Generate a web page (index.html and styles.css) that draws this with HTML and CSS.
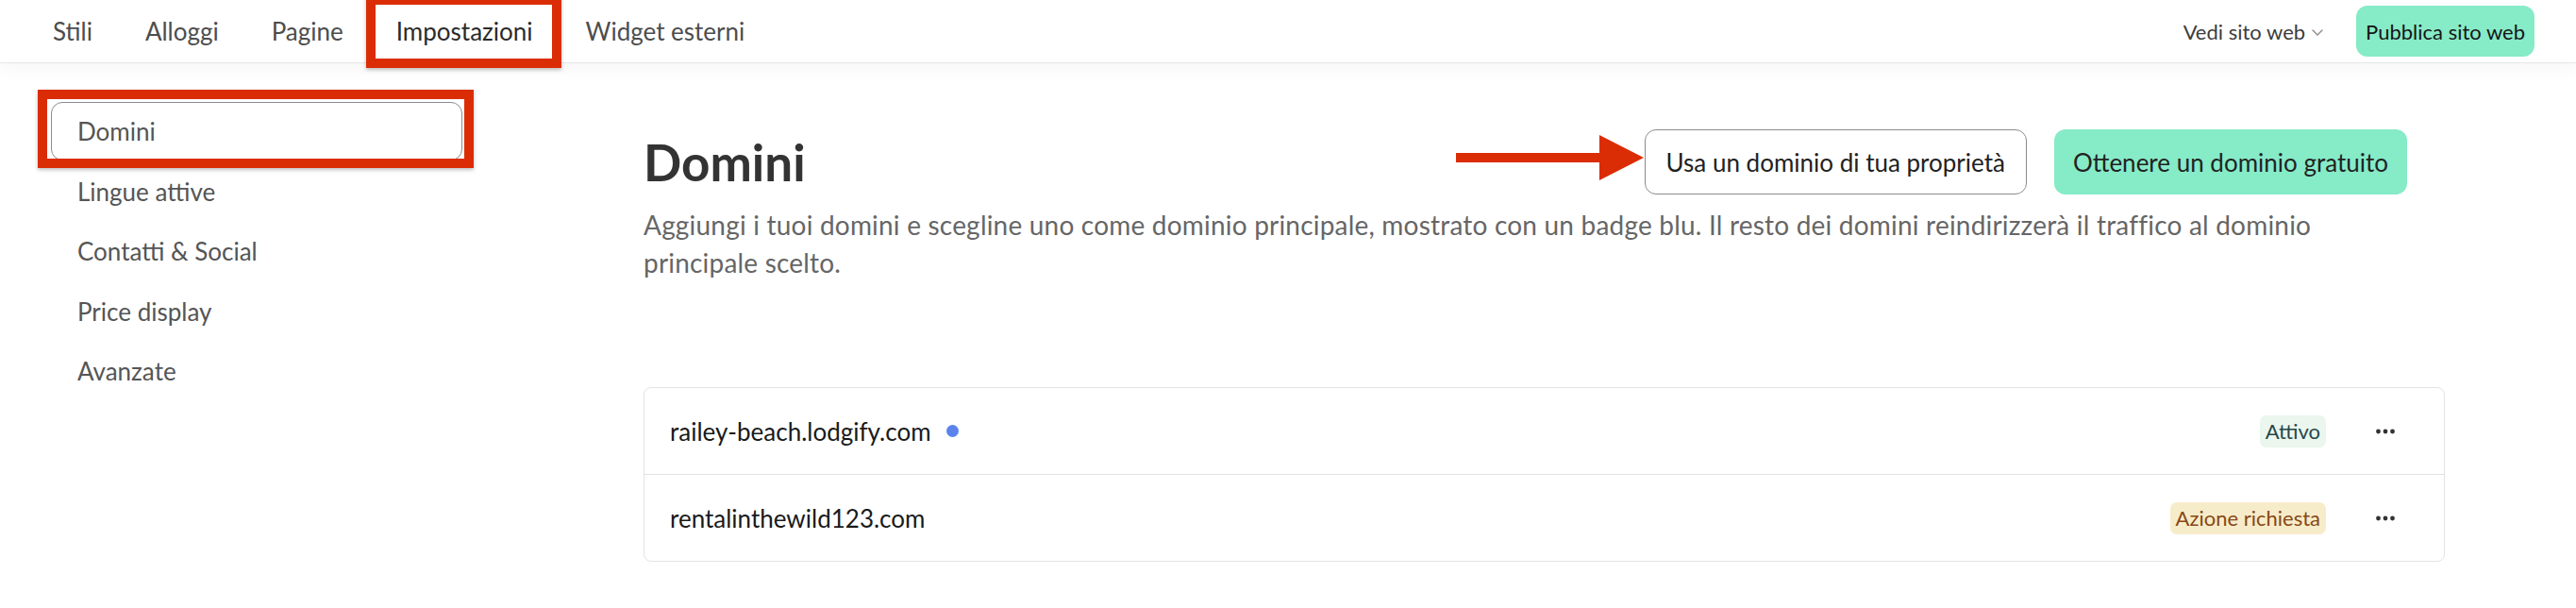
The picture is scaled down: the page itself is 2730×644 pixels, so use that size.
FILE: index.html
```html
<!DOCTYPE html>
<html>
<head>
<title>Domini - Impostazioni</title>
<link rel="stylesheet" href="styles.css">
</head>
<body>

<!-- top bar -->
<header class="topbar">
    <nav class="tabs">
        <a class="tab">Stili</a>
        <a class="tab">Alloggi</a>
        <a class="tab">Pagine</a>
        <a class="tab tab-active">Impostazioni<span class="mark mark-tab"></span></a>
        <a class="tab">Widget esterni</a>
    </nav>
    <div class="topbar-right">
        <a class="view-site">Vedi sito web
            <svg class="chevron" width="12" height="7" viewBox="0 0 12 7"><path d="M1 1l5 5 5-5" fill="none" stroke="#8a8a8a" stroke-width="1.4" stroke-linecap="round" stroke-linejoin="round"/></svg>
        </a>
        <button class="btn-publish">Pubblica sito web</button>
    </div>
</header>

<div class="layout">

    <!-- settings menu -->
    <aside class="side-menu">
        <a class="side-item side-active">Domini<span class="mark mark-side"></span></a>
        <a class="side-item">Lingue attive</a>
        <a class="side-item">Contatti &amp; Social</a>
        <a class="side-item">Price display</a>
        <a class="side-item">Avanzate</a>
    </aside>

    <!-- domains -->
    <main class="content">
        <div class="content-head">
            <h1>Domini</h1>
            <div class="head-actions">
                <button class="btn btn-outline">Usa un dominio di tua proprietà
                    <svg class="arrow" width="200" height="48" viewBox="0 0 200 48"><path d="M0 19h152V0l47 24-47 24V29H0z" fill="#db2d05"/></svg>
                </button>
                <button class="btn btn-green">Ottenere un dominio gratuito</button>
            </div>
        </div>

        <p class="intro">Aggiungi i tuoi domini e scegline uno come dominio principale, mostrato con un badge blu. Il resto dei domini reindirizzerà il traffico al dominio principale scelto.</p>

        <div class="domain-list">
            <div class="domain-row">
                <span class="domain-name">railey-beach.lodgify.com <span class="primary-dot"></span></span>
                <span class="badge badge-ok">Attivo</span>
                <button class="more"><svg width="20" height="6" viewBox="0 0 20 6"><circle cx="2.5" cy="3" r="2.4"/><circle cx="10" cy="3" r="2.4"/><circle cx="17.5" cy="3" r="2.4"/></svg></button>
            </div>
            <div class="domain-row">
                <span class="domain-name">rentalinthewild123.com</span>
                <span class="badge badge-warn">Azione richiesta</span>
                <button class="more"><svg width="20" height="6" viewBox="0 0 20 6"><circle cx="2.5" cy="3" r="2.4"/><circle cx="10" cy="3" r="2.4"/><circle cx="17.5" cy="3" r="2.4"/></svg></button>
            </div>
        </div>
    </main>

</div>

</body>
</html>
```

FILE: styles.css
```css
body {
    margin: 0;
    background-color: #ffffff;
    font-family: "Lato", "Liberation Sans", sans-serif;
    color: #333333;
}

a {
    text-decoration: none;
    color: inherit;
}

button {
    font-family: inherit;
    cursor: pointer;
}

/* top bar */

.topbar {
    height: 66px;
    display: flex;
    align-items: center;
    justify-content: space-between;
    border-bottom: 1px solid #e6e6e6;
    box-shadow: 0 6px 18px rgba(0, 0, 0, 0.04);
    padding: 0 44px 0 28px;
}

.tabs {
    display: flex;
    height: 100%;
}

.tab {
    position: relative;
    display: flex;
    align-items: center;
    padding: 0 28px;
    font-size: 26px;
    color: #4d4d4d;
}

.tab-active {
    color: #2b2b2b;
}

.topbar-right {
    display: flex;
    align-items: center;
}

.view-site {
    display: flex;
    align-items: center;
    gap: 7px;
    font-size: 22px;
    color: #3d3d3d;
    margin-right: 35px;
}

.chevron {
    margin-top: 2px;
}

.btn-publish {
    height: 54px;
    padding: 0 10px;
    border: none;
    border-radius: 12px;
    background-color: #86ebc7;
    color: #161616;
    font-size: 22px;
}

/* red annotation marks */

.mark {
    position: absolute;
    border: 10px solid #db2d05;
    box-shadow: 0 2px 4px rgba(0, 0, 0, 0.25);
    pointer-events: none;
}

.mark-tab {
    top: -5px;
    bottom: -6px;
    left: -4px;
    right: -2px;
}

.mark-side {
    top: -14px;
    bottom: -9px;
    left: -15px;
    right: -13px;
}

/* page */

.layout {
    display: flex;
    padding-top: 41px;
}

.side-menu {
    width: 436px;
    margin-left: 54px;
    display: flex;
    flex-direction: column;
    gap: 1.5px;
}

.side-item {
    position: relative;
    box-sizing: border-box;
    height: 62px;
    display: flex;
    align-items: center;
    padding-left: 27px;
    border: 1px solid transparent;
    border-radius: 12px;
    font-size: 26px;
    color: #555555;
}

.side-active {
    border-color: #8c8c8c;
}

.content {
    width: 1909px;
    margin-left: 192px;
}

.content-head {
    display: flex;
    align-items: center;
    justify-content: space-between;
    padding-right: 40px;
    margin-top: 29px;
}

.content-head h1 {
    margin: 0;
    font-size: 53px;
    font-weight: 700;
    color: #333333;
}

.head-actions {
    display: flex;
    gap: 29px;
}

.btn {
    height: 69px;
    padding: 0 22px;
    border-radius: 12px;
    font-size: 26px;
    color: #222222;
}

.btn-outline {
    position: relative;
    background-color: #ffffff;
    border: 1px solid #8c8c8c;
}

.btn-green {
    background-color: #86ebc7;
    border: none;
    padding: 0 20px;
}

.arrow {
    position: absolute;
    left: -201px;
    top: 5px;
}

.intro {
    margin: 12px 0 0;
    max-width: 1870px;
    font-size: 28px;
    letter-spacing: 0.2px;
    line-height: 40px;
    color: #666666;
}

/* domain list */

.domain-list {
    margin-top: 112px;
    border: 1px solid #e3e3e3;
    border-radius: 8px;
}

.domain-row {
    height: 91px;
    display: flex;
    align-items: center;
    padding: 0 42px 0 27px;
}

.domain-row + .domain-row {
    border-top: 1px solid #e3e3e3;
}

.domain-name {
    flex: 1;
    display: flex;
    align-items: center;
    gap: 16px;
    font-size: 26px;
    color: #1a1a1a;
}

.primary-dot {
    width: 13px;
    height: 13px;
    border-radius: 50%;
    background-color: #5a84ec;
}

.badge {
    height: 34px;
    display: flex;
    align-items: center;
    padding: 0 6px;
    border-radius: 7px;
    font-size: 22px;
}

.badge-ok {
    background-color: #eaf6ee;
    color: #27474a;
}

.badge-warn {
    background-color: #f7ecca;
    color: #874813;
}

.more {
    width: 40px;
    height: 40px;
    margin-left: 43px;
    display: flex;
    align-items: center;
    justify-content: center;
    background: none;
    border: none;
    padding: 0;
    fill: #333333;
}
```
